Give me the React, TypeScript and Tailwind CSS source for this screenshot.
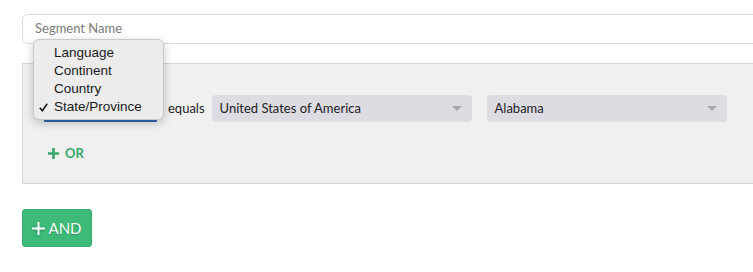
import React from "react";

function Arrow() {
  return (
    <svg width="10" height="6" viewBox="0 0 10 6" className="shrink-0">
      <path d="M0 0 L10 0 L5 5 Z" fill="#a9a9ad" />
    </svg>
  );
}

function Select({ label, w }: { label: string; w: string }) {
  return (
    <div
      className={`${w} h-[27px] rounded-[4px] bg-[#dcdce2] flex items-center justify-between pl-[8px] pr-[10px] text-[13px] text-[#222]`}
    >
      <span>{label}</span>
      <Arrow />
    </div>
  );
}

export default function App() {
  return (
    <div className="w-[753px] h-[272px] overflow-hidden bg-white relative font-['Lato',sans-serif]">
      <div className="ml-[22px] pt-[14px] w-[780px]">
        <div className="h-[30px] rounded-[6px] border border-[#dcdce0] flex items-center px-[12px] text-[13px] text-[#7a7a7a]">
          Segment Name
        </div>
        <div className="mt-[19px] h-[121px] border border-[#d6d6d6] bg-[#f0f0f0] pt-[31px] pl-[21px]">
          <div className="flex items-center">
            <div className="w-[113px] h-[27px] border-b-2 border-[#2f6db5] bg-[#e8e8ec]" />
            <span className="ml-[11px] mr-[7px] text-[13px] text-[#222]">equals</span>
            <Select label="United States of America" w="w-[260px]" />
            <div className="w-[15px]" />
            <Select label="Alabama" w="w-[240px]" />
          </div>
          <div className="mt-[22px] ml-[4px] flex items-center gap-[6px] text-[#3aa56b] font-bold text-[13px]">
            <svg width="11" height="11" viewBox="0 0 11 11">
              <path d="M5.5 0 V11 M0 5.5 H11" stroke="#3aa56b" strokeWidth="2.6" />
            </svg>
            <span>OR</span>
          </div>
        </div>
        <div className="mt-[25px] w-[70px] h-[38px] rounded-[3px] bg-[#3dba78] border border-[#37ad6f] flex items-center justify-center gap-[3px] text-white text-[15px] [text-shadow:0_1px_1px_rgba(0,0,0,0.25)]">
          <svg width="13" height="13" viewBox="0 0 13 13" className="drop-shadow-[0_1px_1px_rgba(0,0,0,0.25)]">
            <path d="M6.5 0 V13 M0 6.5 H13" stroke="#fff" strokeWidth="2" />
          </svg>
          <span>AND</span>
        </div>
      </div>

      <div className="absolute left-[33px] top-[39px] w-[131px] h-[81px] rounded-[6px] bg-[#ececec] border border-[#c9c9c9] shadow-[0_3px_10px_rgba(0,0,0,0.22)] pt-[4px] font-['Liberation_Sans',sans-serif] text-[13.5px] text-[#1a1a1a]">
        {["Language", "Continent", "Country", "State/Province"].map((t, i) => (
          <div key={t} className="h-[18px] flex items-center relative pl-[20px] leading-none">
            {i === 3 && (
              <svg width="9" height="9" viewBox="0 0 9 9" className="absolute left-[5px] top-[5px]">
                <path d="M0.8 4.8 L3.3 7.6 L8.2 0.8" fill="none" stroke="#1a1a1a" strokeWidth="1.6" />
              </svg>
            )}
            {t}
          </div>
        ))}
      </div>
    </div>
  );
}
